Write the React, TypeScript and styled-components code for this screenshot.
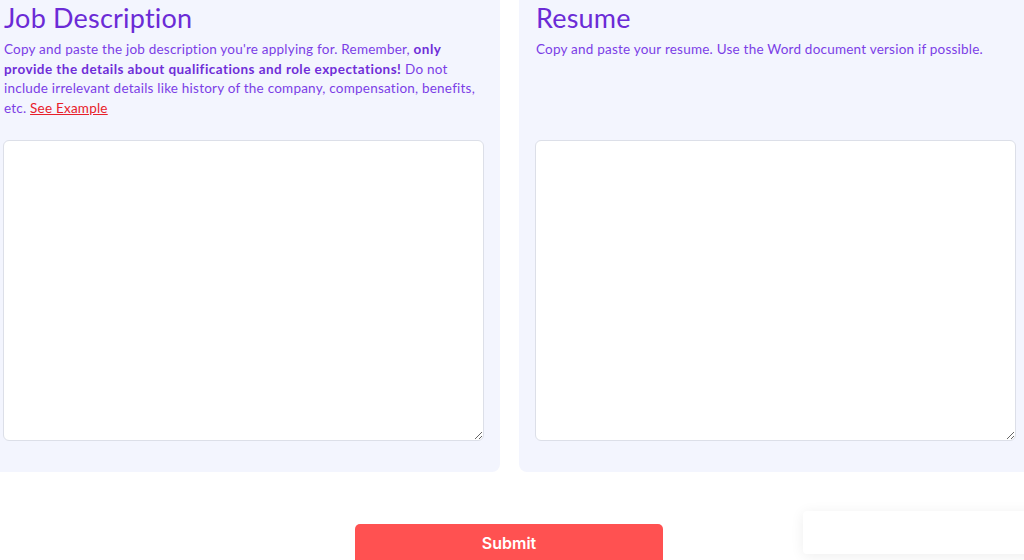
import styled, { createGlobalStyle } from "styled-components";

const GlobalStyle = createGlobalStyle`
  html, body {
    margin: 0;
    padding: 0;
    background: #ffffff;
    overflow: hidden;
  }
  body {
    font-family: "Lato", "Noto Sans", sans-serif;
  }
`;

const Page = styled.div`
  width: 1024px;
  height: 560px;
  overflow: hidden;
  position: relative;
`;

const Columns = styled.div`
  display: grid;
  grid-template-columns: 513px 513px;
  gap: 19px;
  margin-left: -13px;
  margin-top: -14px;
`;

const Panel = styled.section`
  background: #f3f5fe;
  border-radius: 8px;
  padding: 14px 16px 31px 16px;
  display: flex;
  flex-direction: column;
`;

const Heading = styled.h2`
  margin: 0 0 0 1px;
  font-size: 27px;
  line-height: 36px;
  font-weight: 400;
  letter-spacing: 0.2px;
  color: #6b2bd6;
`;

const Description = styled.p`
  margin: 4px 0 0 1px;
  font-size: 13.5px;
  line-height: 19.5px;
  letter-spacing: 0.22px;
  color: #7b3ee6;
  height: 100px;
`;

const Strong = styled.b`
  font-weight: 700;
  letter-spacing: 0.45px;
  color: #6f2ed8;
`;

const ExampleLink = styled.a`
  color: #e8202a;
  text-decoration: underline;
  cursor: pointer;
`;

const Field = styled.textarea`
  box-sizing: border-box;
  width: 481px;
  height: 301px;
  margin: 0;
  border: 1px solid #dcdfe8;
  border-radius: 6px;
  background: #ffffff;
  font-family: inherit;
  font-size: 14px;
  padding: 8px;
  resize: vertical;
  outline: none;
`;

const Actions = styled.div`
  display: flex;
  justify-content: center;
  padding-top: 52px;
  padding-right: 6px;
`;

const SubmitButton = styled.button`
  width: 308px;
  height: 44px;
  border: none;
  border-radius: 5px;
  background: #ff5151;
  color: #ffffff;
  font-family: "Inter", "Liberation Sans", Arial, sans-serif;
  font-size: 16px;
  font-weight: 600;
  padding-bottom: 8px;
  cursor: pointer;
`;

const FloatingCard = styled.div`
  position: absolute;
  left: 803px;
  top: 511px;
  width: 240px;
  height: 43px;
  background: #ffffff;
  border-radius: 4px;
  box-shadow: 0 2px 14px rgba(0, 0, 0, 0.07);
`;

export default function App() {
  return (
    <Page>
      <GlobalStyle />
      <Columns>
        <Panel>
          <Heading>Job Description</Heading>
          <Description>
            Copy and paste the job description you're applying for. Remember,{" "}
            <Strong>only provide the details about qualifications and role expectations!</Strong>{" "}
            Do not include irrelevant details like history of the company, compensation,
            benefits, etc. <ExampleLink>See Example</ExampleLink>
          </Description>
          <Field />
        </Panel>
        <Panel>
          <Heading>Resume</Heading>
          <Description>
            Copy and paste your resume. Use the Word document version if possible.
          </Description>
          <Field />
        </Panel>
      </Columns>
      <Actions>
        <SubmitButton>Submit</SubmitButton>
      </Actions>
      <FloatingCard />
    </Page>
  );
}
